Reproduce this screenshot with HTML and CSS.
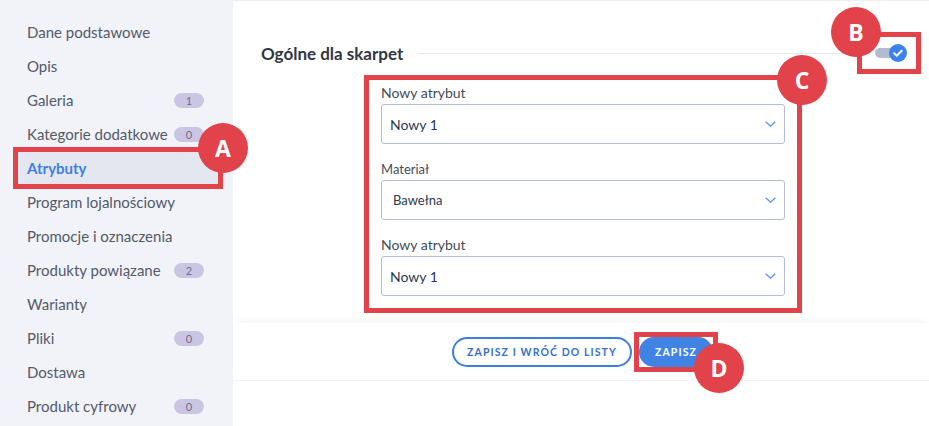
FILE: index.html
```html
<!DOCTYPE html>
<html>
	<head>
		<meta charset="utf-8">
		<title>Atrybuty</title>
		<link rel="stylesheet" href="styles.css">
	</head>
	<body>
		<div class="page">
			<aside class="sidebar">
				<ul class="menu">
					<li class="item">Dane podstawowe</li>
					<li class="item">Opis</li>
					<li class="item">Galeria <span class="badge">1</span></li>
					<li class="item">Kategorie dodatkowe <span class="badge">0</span></li>
					<li class="item active">Atrybuty<span class="marker marker-a">A</span></li>
					<li class="item">Program lojalnościowy</li>
					<li class="item">Promocje i oznaczenia</li>
					<li class="item">Produkty powiązane <span class="badge">2</span></li>
					<li class="item">Warianty</li>
					<li class="item">Pliki <span class="badge">0</span></li>
					<li class="item">Dostawa</li>
					<li class="item">Produkt cyfrowy <span class="badge">0</span></li>
				</ul>
			</aside>
			<main class="main">
				<section class="card">
					<div class="card-head">
						<h2 class="title">Ogólne dla skarpet</h2>
						<span class="rule"></span>
						<div class="switch-wrap">
							<span class="switch">
								<span class="knob">
									<svg width="18" height="18" viewBox="0 0 18 18"><path d="M5.2 9.3l2.5 2.4 5-5" fill="none" stroke="#fff" stroke-width="2" stroke-linecap="round" stroke-linejoin="round"/></svg>
								</span>
							</span>
							<span class="marker marker-b">B</span>
						</div>
					</div>
					<div class="fields">
						<div class="field">
							<label class="label">Nowy atrybut</label>
							<div class="select">
								<span class="value">Nowy 1</span>
								<svg class="chevron" width="11" height="6" viewBox="0 0 11 6"><path d="M0.7 0.7l4.8 4.5 4.8-4.5" fill="none" stroke="#5a95ee" stroke-width="1.3"/></svg>
							</div>
						</div>
						<div class="field field-sm">
							<label class="label">Materiał</label>
							<div class="select">
								<span class="value">Bawełna</span>
								<svg class="chevron" width="11" height="6" viewBox="0 0 11 6"><path d="M0.7 0.7l4.8 4.5 4.8-4.5" fill="none" stroke="#5a95ee" stroke-width="1.3"/></svg>
							</div>
						</div>
						<div class="field">
							<label class="label">Nowy atrybut</label>
							<div class="select">
								<span class="value">Nowy 1</span>
								<svg class="chevron" width="11" height="6" viewBox="0 0 11 6"><path d="M0.7 0.7l4.8 4.5 4.8-4.5" fill="none" stroke="#5a95ee" stroke-width="1.3"/></svg>
							</div>
						</div>
						<span class="marker marker-c">C</span>
					</div>
				</section>
				<div class="actions">
					<button class="btn btn-outline">ZAPISZ I WRÓĆ DO LISTY</button>
					<div class="save-wrap">
						<button class="btn btn-primary">ZAPISZ</button>
						<span class="marker marker-d">D</span>
					</div>
				</div>
			</main>
		</div>
	</body>
</html>
```

FILE: styles.css
```css
*{
	margin:0;
	padding:0;
	box-sizing:border-box;
}
body{
	font-family:Lato, "Open Sans", sans-serif;
	background-color:#ffffff;
	width:929px;
	height:426px;
	overflow:hidden;
}
ul{
	list-style:none;
}
.page{
	display:flex;
	height:426px;
}
.sidebar{
	width:233px;
	flex-shrink:0;
	background-color:#f2f3f8;
	padding:16px 15px 0 18px;
}
.menu .item{
	position:relative;
	display:flex;
	align-items:center;
	justify-content:space-between;
	height:32px;
	margin-bottom:2px;
	padding:0 14px 0 9px;
	font-size:15px;
	color:#525a6b;
	white-space:nowrap;
}
.menu .badge{
	width:30px;
	height:15px;
	border-radius:8px;
	background-color:#cbc5e4;
	color:#6c6d8c;
	font-size:11px;
	line-height:15px;
	text-align:center;
}
.menu .active{
	background-color:#e5e7f0;
	color:#3d7fe6;
	font-weight:bold;
	outline:5px solid #e2424a;
}
.marker{
	position:absolute;
	width:50px;
	height:50px;
	border-radius:50%;
	background-color:#e2424a;
	color:#ffffff;
	font-family:"Open Sans", Lato, sans-serif;
	font-weight:bold;
	font-size:23px;
	line-height:50px;
	text-align:center;
	letter-spacing:0;
	z-index:5;
}
.marker-a{
	left:180px;
	top:-29px;
}
.main{
	flex:1;
	display:flex;
	flex-direction:column;
	background-color:#ffffff;
	border-top:1px solid #eceef3;
}
.card{
	padding:31px 8px 10px 28px;
}
.card-head{
	display:flex;
	align-items:center;
	height:42px;
}
.title{
	font-size:17px;
	font-weight:bold;
	color:#303744;
}
.rule{
	flex:1;
	height:1px;
	margin-left:15px;
	background-color:#e6e8ec;
}
.switch-wrap{
	position:relative;
	display:flex;
	align-items:center;
	height:42px;
	width:64px;
	padding:0 10px 0 13px;
	border:5px solid #e2424a;
}
.switch{
	position:relative;
	width:26px;
	height:10px;
	border-radius:5px;
	background-color:#b3bbd0;
}
.switch .knob{
	position:absolute;
	right:-6px;
	top:-4px;
	width:18px;
	height:18px;
	border-radius:50%;
	background-color:#3b82ee;
}
.switch .knob svg{
	display:block;
}
.marker-b{
	left:-31px;
	top:-30px;
}
.fields{
	position:relative;
	width:438px;
	margin:1px 0 0 103px;
	padding:4px 12px 12px 12px;
	border:5px solid #e2424a;
}
.field{
	margin-top:16px;
}
.field:first-child{
	margin-top:0;
}
.label{
	display:block;
	height:18px;
	margin-bottom:2px;
	font-size:14px;
	line-height:18px;
	color:#454c5a;
}
.select{
	display:flex;
	align-items:center;
	justify-content:space-between;
	height:40px;
	padding:0 8px 0 8px;
	border:1px solid #b3bed6;
	border-radius:3px;
	font-size:14px;
	color:#2b3a4e;
}
.field-sm .label{
	font-size:13px;
}
.field-sm .select{
	padding-left:11px;
	font-size:13px;
}
.chevron{
	display:block;
}
.marker-c{
	left:408px;
	top:-25px;
}
.actions{
	display:flex;
	justify-content:center;
	align-items:center;
	gap:2px;
	height:58px;
	padding-left:8px;
	border-bottom:1px solid #f1f2f5;
	box-shadow:0 -5px 8px -4px rgba(0,0,0,0.06);
}
.btn{
	height:30px;
	padding:0;
	border-radius:15px;
	font-family:Lato, sans-serif;
	font-size:10.5px;
	font-weight:bold;
	letter-spacing:1.1px;
	white-space:nowrap;
	text-align:center;
	cursor:pointer;
}
.btn-outline{
	width:180px;
	border:2px solid #3d7fe0;
	background-color:#ffffff;
	color:#3a6fd0;
}
.save-wrap{
	position:relative;
	border:5px solid #e2424a;
}
.btn-primary{
	display:block;
	width:74px;
	border:none;
	background-color:#3f84e5;
	color:#ffffff;
}
.marker-d{
	left:55px;
	top:6px;
}
```
